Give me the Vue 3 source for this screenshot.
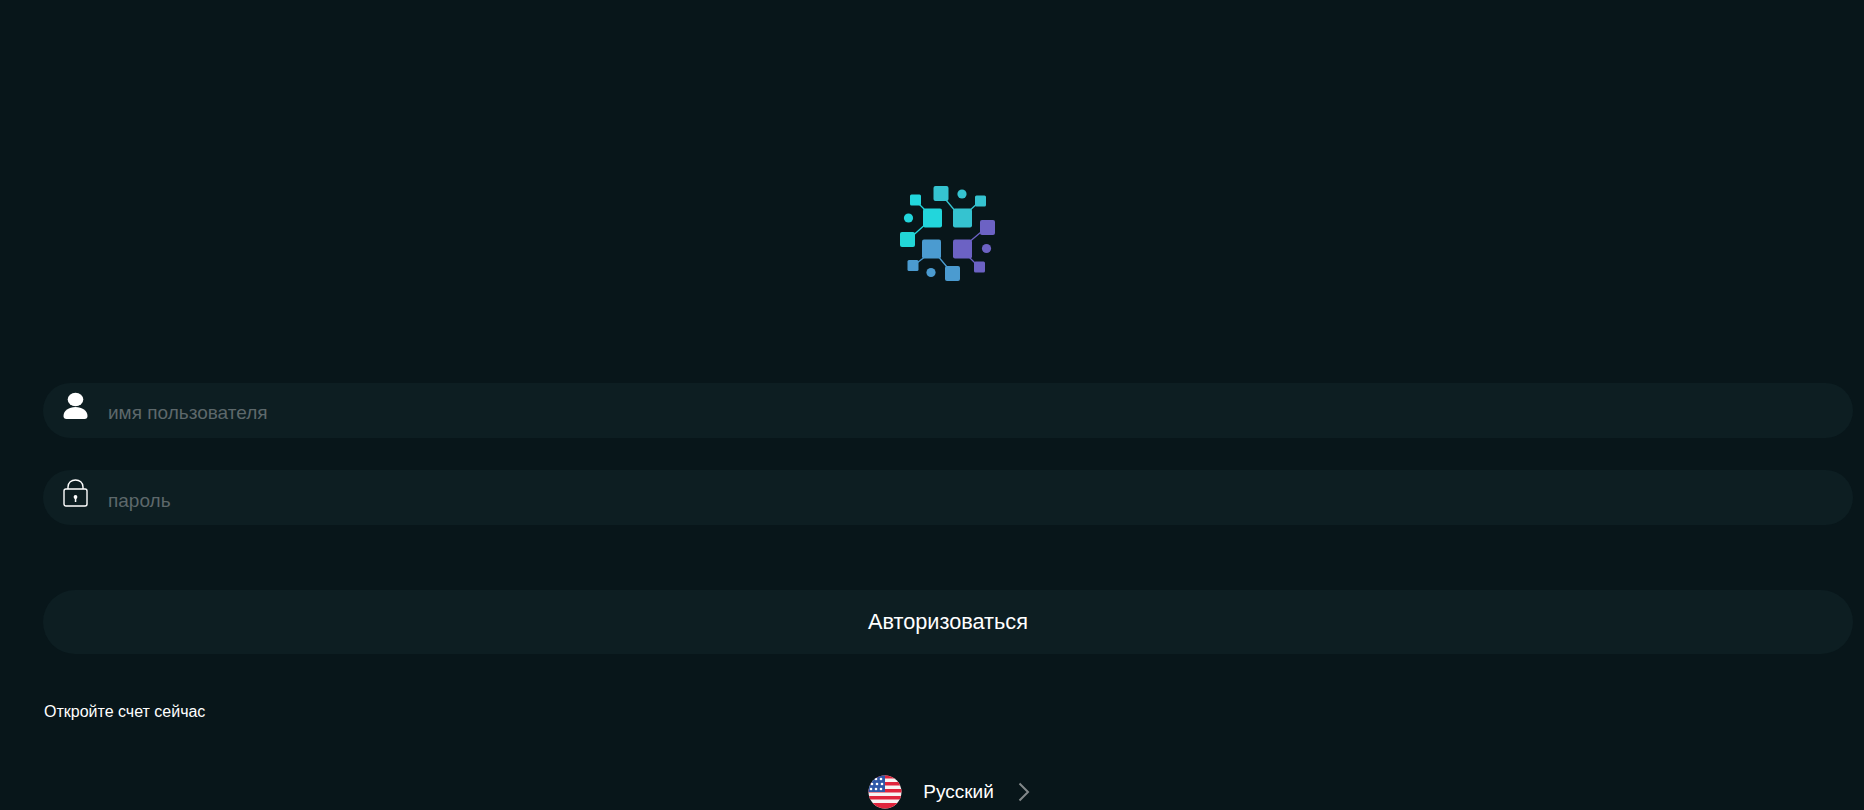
<template>
  <div class="login-page">
    <div class="logo">
      <svg xmlns="http://www.w3.org/2000/svg" width="120" height="120" viewBox="0 0 120 120">
        <g fill="none" stroke-width="1.300">
          <path d="M35 30 L50 45 M28 70 L48 52" stroke="#22d6dc" />
          <path d="M61 24 L76 42 M100 31 L88 42" stroke="#35c3d0" />
          <path d="M33 96 L46 86 M57 85 L72 103" stroke="#4b9bd0" />
          <path d="M107 57 L88 73 M99 97 L88 86" stroke="#6c62c4" />
        </g>
        <rect x="43" y="38.500" width="19" height="19" rx="2" fill="#22d6dc" />
        <rect x="73" y="38.500" width="19" height="19" rx="2" fill="#35c3d0" />
        <rect x="42" y="69.500" width="19" height="19" rx="2" fill="#4b9bd0" />
        <rect x="73" y="69.500" width="19" height="19" rx="2" fill="#6c62c4" />
        <rect x="53.500" y="16" width="15" height="15" rx="2" fill="#35c3d0" />
        <rect x="20" y="62" width="15" height="15" rx="2" fill="#22d6d6" />
        <rect x="100" y="50" width="15" height="15" rx="2" fill="#6c62c4" />
        <rect x="65" y="96" width="15" height="15" rx="2" fill="#4b9bd0" />
        <rect x="30" y="24.500" width="11" height="11" rx="1.500" fill="#22d6dc" />
        <rect x="95" y="25.500" width="11" height="11" rx="1.500" fill="#35c3d0" />
        <rect x="27.500" y="90" width="11" height="11" rx="1.500" fill="#4b9bd0" />
        <rect x="94" y="91.500" width="11" height="11" rx="1.500" fill="#6c62c4" />
        <circle cx="28.500" cy="48" r="4.600" fill="#22d6dc" />
        <circle cx="82" cy="24" r="4.600" fill="#35c3d0" />
        <circle cx="106.500" cy="78.500" r="4.600" fill="#6c62c4" />
        <circle cx="51" cy="102.500" r="4.600" fill="#4b9bd0" />
      </svg>
    </div>

    <form class="login-form" @submit.prevent>
      <label class="field">
        <svg class="field-icon" xmlns="http://www.w3.org/2000/svg" width="26" height="28" viewBox="0 0 26 28">
          <ellipse cx="12.500" cy="7.500" rx="7.800" ry="6.800" fill="#fff" />
          <path d="M0.500 24 C0.500 18.500 6 15 12.500 15 C19 15 24.500 18.500 24.500 24 C24.500 26 23.500 27 21.500 27 H3.500 C1.500 27 0.500 26 0.500 24 Z" fill="#fff" />
        </svg>
        <input type="text" placeholder="имя пользователя" />
      </label>

      <label class="field field-second">
        <svg class="field-icon" xmlns="http://www.w3.org/2000/svg" width="26" height="28" viewBox="0 0 26 28">
          <rect x="1" y="10" width="23" height="17" rx="2" fill="none" stroke="#fff" stroke-width="1.400" />
          <path d="M5 10 V8 C5 3.500 8.500 1 12.500 1 C16.500 1 20 3.500 20 8 V10" fill="none" stroke="#fff" stroke-width="1.400" />
          <circle cx="12.500" cy="18" r="1.900" fill="#fff" />
          <rect x="11.800" y="18" width="1.500" height="5" fill="#fff" />
        </svg>
        <input type="password" placeholder="пароль" />
      </label>

      <button class="submit" type="submit">Авторизоваться</button>
    </form>

    <a class="signup">Откройте счет сейчас</a>

    <div class="language">
      <svg class="flag" xmlns="http://www.w3.org/2000/svg" width="34" height="34" viewBox="0 0 34 34">
        <defs>
          <clipPath id="flag-circle"><circle cx="17" cy="17" r="16.500" /></clipPath>
        </defs>
        <g clip-path="url(#flag-circle)">
          <rect width="34" height="34" fill="#f7f3f3" />
          <rect y="0" width="34" height="3.500" fill="#e0243c" />
          <rect y="7" width="34" height="3.500" fill="#e0243c" />
          <rect y="14" width="34" height="3.500" fill="#e0243c" />
          <rect y="21" width="34" height="3.500" fill="#e0243c" />
          <rect y="28" width="34" height="6" fill="#e0243c" />
          <rect width="17" height="17" fill="#2f57a8" />
          <g fill="#fff">
            <circle v-for="star in stars" :key="star.x + '-' + star.y" :cx="star.x" :cy="star.y" r="1.300" />
          </g>
        </g>
      </svg>
      <span class="language-name">Русский</span>
      <svg xmlns="http://www.w3.org/2000/svg" width="12" height="20" viewBox="0 0 12 20">
        <path d="M1.500 1.500 L10 10 L1.500 18.500" fill="none" stroke="#82888a" stroke-width="2" />
      </svg>
    </div>
  </div>
</template>

<script setup>
const stars = [
  { x: 8, y: 4 }, { x: 13, y: 4 },
  { x: 4, y: 9 }, { x: 9, y: 9 }, { x: 14, y: 9 },
  { x: 3, y: 14 }, { x: 8, y: 14 }, { x: 13, y: 14 }
]
</script>

<style scoped>
.login-page {
  height: 810px;
  box-sizing: border-box;
  overflow: hidden;
  padding: 0 11px 0 43px;
  background: #08161a;
  font-family: "Liberation Sans", Arial, sans-serif;
  color: #fff;
  display: flex;
  flex-direction: column;
}

.logo {
  display: flex;
  justify-content: center;
  margin-top: 170px;
  padding-right: 16px;
  height: 120px;
  flex-shrink: 0;
}

.login-form {
  margin-top: 93px;
  display: flex;
  flex-direction: column;
}

.field {
  height: 55px;
  border-radius: 28px;
  background: #0d1e22;
  display: flex;
  align-items: center;
  padding-left: 20px;
  gap: 19px;
}

.field-second {
  margin-top: 32px;
}

.field-icon {
  flex-shrink: 0;
  position: relative;
  top: -5px;
}

.field input {
  flex: 1;
  border: 0;
  outline: 0;
  background: transparent;
  color: #fff;
  font-family: inherit;
  font-size: 19px;
  padding: 5px 0 0;
}

.field-second input {
  padding-top: 6px;
}

.field input::placeholder {
  color: #5d686b;
  opacity: 1;
}

.submit {
  margin-top: 65px;
  height: 64px;
  border: 0;
  border-radius: 32px;
  background: #0d1e22;
  color: #fff;
  font-family: inherit;
  font-size: 21.700px;
  padding: 0;
}

.signup {
  margin-top: 48px;
  margin-left: 1px;
  font-size: 16px;
  line-height: 20px;
  align-self: flex-start;
}

.language {
  margin-top: 53px;
  padding-left: 2px;
  display: flex;
  align-items: center;
  justify-content: center;
  gap: 21px;
  font-size: 19px;
}

.flag {
  flex-shrink: 0;
}

.language-name {
  margin-right: 3px;
}
</style>

<style>
html, body {
  margin: 0;
  background: #08161a;
}
</style>
